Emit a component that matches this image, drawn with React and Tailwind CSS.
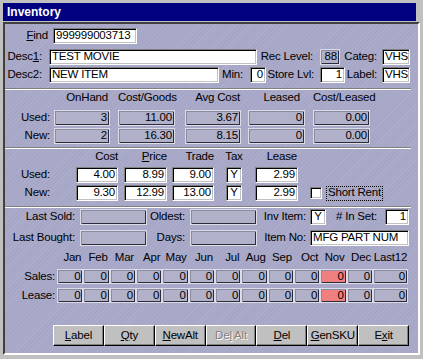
import React from 'react';

const FONT = "font-['Liberation_Sans',Arial,sans-serif]";

const WHITE_BOX =
  'h-full shrink-0 bg-white border border-t-[#808080] border-l-[#808080] border-r-white border-b-white shadow-[inset_1px_1px_0_#000000,inset_-1px_-1px_0_#c0c0c0] flex items-center overflow-hidden whitespace-nowrap';
const GRAY_BOX =
  'h-full shrink-0 border border-[#dcdce6] shadow-[inset_1px_1px_0_#8a8aa2,inset_-1px_-1px_0_#2c2c3c] flex items-center justify-end pr-[2px] overflow-hidden whitespace-nowrap';

const Lbl = ({ className = '', children }) => (
  <span className={`shrink-0 whitespace-nowrap text-right ${className}`}>{children}</span>
);

const Inp = ({ className = '', right, center, children }) => (
  <div className={`${WHITE_BOX} ${right ? 'justify-end pr-[2px]' : center ? 'justify-center' : 'pl-[2px]'} ${className}`}>
    {children}
  </div>
);

const RO = ({ className = '', pink, children }) => (
  <div className={`${GRAY_BOX} ${pink ? 'bg-[#f08080]' : 'bg-[#b1b1c9]'} ${className}`}>{children}</div>
);

const Sep = () => <div className="h-[2px] w-[406px] border-t border-t-[#808080] border-b border-b-white" />;

const months = ['Jan', 'Feb', 'Mar', 'Apr', 'May', 'Jun', 'Jul', 'Aug', 'Sep', 'Oct', 'Nov', 'Dec'];

const Btn = ({ children, disabled }) => (
  <div
    className={`h-[21px] bg-[#c0c0c0] border border-t-white border-l-white border-r-black border-b-black shadow-[inset_-1px_-1px_0_#808080] flex items-center justify-center whitespace-pre ${
      disabled ? 'text-[#808080] [text-shadow:1px_1px_0_#ffffff]' : ''
    }`}
  >
    {children}
  </div>
);

export default function App() {
  return (
    <div className={`w-[423px] h-[359px] bg-[#c0c0c0] pt-[3px] pl-[3px] overflow-hidden text-black text-[11.5px] tracking-[-0.2px] leading-none ${FONT}`}>
      {/* title bar */}
      <div className="h-[18px] w-[413px] bg-[#000080] flex items-center pl-[4px] text-white font-bold text-[12px] tracking-normal">
        Inventory
      </div>

      {/* form body */}
      <div className="mt-[1px] w-[417px] h-[333px] border-2 border-t-[#404040] border-l-[#404040] border-r-white border-b-white bg-[repeating-linear-gradient(135deg,#a6a6c6_0px,#a6a6c6_2px,#adadcb_2px,#adadcb_3px)]">
        {/* Find */}
        <div className="mt-[4px] h-[16px] flex items-center">
          <Lbl className="w-[43px]">
            <u>F</u>ind
          </Lbl>
          <Inp className="ml-[5px] w-[84px]">999999003713</Inp>
        </div>

        {/* Desc1 */}
        <div className="mt-[5px] h-[16px] flex items-center">
          <Lbl className="w-[37px]">
            Desc<u>1</u>:
          </Lbl>
          <Inp className="ml-[7px] w-[208px]">TEST MOVIE</Inp>
          <Lbl className="w-[56px]">Rec Level:</Lbl>
          <RO className="ml-[7px] w-[20px]">88</RO>
          <Lbl className="w-[37px]">Categ:</Lbl>
          <Inp className="ml-[5px] w-[28px]">VHS</Inp>
        </div>

        {/* Desc2 */}
        <div className="mt-[2px] h-[16px] flex items-center">
          <Lbl className="w-[37px]">Desc2:</Lbl>
          <Inp className="ml-[7px] w-[170px]">NEW ITEM</Inp>
          <Lbl className="w-[24px]">Min:</Lbl>
          <Inp right className="ml-[7px] w-[16px]">0</Inp>
          <Lbl className="w-[48px]">Store Lvl:</Lbl>
          <Inp right className="ml-[6px] w-[25px]">1</Inp>
          <Lbl className="w-[32px]">Label:</Lbl>
          <Inp className="ml-[5px] w-[28px]">VHS</Inp>
        </div>

        <div className="mt-[5px]">
          <Sep />
        </div>

        {/* on hand section */}
        <div className="mt-[1px] h-[14px] flex items-center">
          <span className="w-[49px] shrink-0" />
          <Lbl className="w-[56px] pr-[2px]">OnHand</Lbl>
          <Lbl className="ml-[8px] w-[57px] pr-[1px]">Cost/Goods</Lbl>
          <Lbl className="ml-[10px] w-[56px] pr-[1px]">Avg Cost</Lbl>
          <Lbl className="ml-[7px] w-[57px] pr-[5px]">Leased</Lbl>
          <Lbl className="ml-[8px] w-[57px] pr-[2px]">Cost/Leased</Lbl>
        </div>
        {[
          ['Used:', '3', '11.00', '3.67', '0', '0.00'],
          ['New:', '2', '16.30', '8.15', '0', '0.00'],
        ].map((r, i) => (
          <div key={r[0]} className={`${i === 0 ? 'mt-[5px]' : 'mt-[2px]'} h-[16px] flex items-center`}>
            <Lbl className="w-[45px]">{r[0]}</Lbl>
            <RO className="ml-[4px] w-[56px]">{r[1]}</RO>
            <RO className="ml-[8px] w-[57px]">{r[2]}</RO>
            <RO className="ml-[10px] w-[56px]">{r[3]}</RO>
            <RO className="ml-[7px] w-[57px]">{r[4]}</RO>
            <RO className="ml-[8px] w-[57px]">{r[5]}</RO>
          </div>
        ))}

        <div className="mt-[3px]">
          <Sep />
        </div>

        {/* pricing section */}
        <div className="mt-[1px] h-[14px] flex items-center">
          <span className="w-[45px] shrink-0" />
          <Lbl className="ml-[26px] w-[42px]">Cost</Lbl>
          <Lbl className="ml-[6px] w-[43px]">
            <u>P</u>rice
          </Lbl>
          <Lbl className="ml-[5px] w-[42px]">Trade</Lbl>
          <span className="ml-[8px] w-[24px] shrink-0 text-center">Tax</span>
          <Lbl className="ml-[9px] w-[43px] pr-[1px]">Lease</Lbl>
        </div>
        {[
          ['Used:', '4.00', '8.99', '9.00', 'Y', '2.99'],
          ['New:', '9.30', '12.99', '13.00', 'Y', '2.99'],
        ].map((r, i) => (
          <div key={r[0]} className={`${i === 0 ? 'mt-[3px]' : 'mt-[2px]'} h-[16px] flex items-center`}>
            <Lbl className="w-[45px]">{r[0]}</Lbl>
            <Inp right className="ml-[26px] w-[42px]">{r[1]}</Inp>
            <Inp right className="ml-[6px] w-[43px]">{r[2]}</Inp>
            <Inp right className="ml-[5px] w-[42px]">{r[3]}</Inp>
            <Inp center className="ml-[12px] w-[16px]">{r[4]}</Inp>
            <Inp right className="ml-[13px] w-[43px]">{r[5]}</Inp>
            {i === 1 && (
              <>
                <div className="ml-[12px] w-[12px] h-[12px] shrink-0 bg-white border border-t-[#808080] border-l-[#808080] border-r-white border-b-white shadow-[inset_1px_1px_0_#000000,inset_-1px_-1px_0_#c0c0c0]" />
                <span className="ml-[4px] h-[15px] px-[1px] flex items-center border border-dotted border-black whitespace-nowrap">
                  Short Rent
                </span>
              </>
            )}
          </div>
        ))}

        <div className="mt-[5px]">
          <Sep />
        </div>

        {/* dates section */}
        <div className="mt-[1px] h-[16px] flex items-center">
          <Lbl className="w-[70px]">Last Sold:</Lbl>
          <RO className="ml-[5px] w-[67px]" />
          <Lbl className="w-[38px]">Oldest:</Lbl>
          <RO className="ml-[5px] w-[67px]" />
          <Lbl className="w-[49px]">Inv Item:</Lbl>
          <Inp center className="ml-[4px] w-[16px]">Y</Inp>
          <Lbl className="w-[51px]"># In Set:</Lbl>
          <Inp right className="ml-[8px] w-[24px]">1</Inp>
        </div>
        <div className="mt-[5px] h-[16px] flex items-center">
          <Lbl className="w-[70px]">Last Bought:</Lbl>
          <RO className="ml-[5px] w-[67px]" />
          <Lbl className="w-[38px]">Days:</Lbl>
          <RO className="ml-[5px] w-[67px]" />
          <Lbl className="w-[49px]">Item No:</Lbl>
          <Inp className="ml-[4px] w-[99px]">MFG PART NUM</Inp>
        </div>

        {/* monthly */}
        <div className="mt-[5px] h-[14px] flex items-center">
          <span className="w-[52px] shrink-0" />
          <div className="grid grid-cols-[repeat(12,26.33px)_35px]">
            {months.map((m) => (
              <span key={m} className="text-right pr-[2px]">
                {m}
              </span>
            ))}
            <span className="text-center">Last12</span>
          </div>
        </div>
        {['Sales:', 'Lease:'].map((l) => (
          <div key={l} className="mt-[4px] h-[15px] flex items-center">
            <Lbl className="w-[50px]">{l}</Lbl>
            <div className="ml-[2px] h-full grid grid-cols-[repeat(12,26.33px)_35px]">
              {months.map((m, j) => (
                <RO key={m} pink={j === 10}>
                  0
                </RO>
              ))}
              <RO>0</RO>
            </div>
          </div>
        ))}

        {/* buttons */}
        <div className="mt-[22px] ml-[48px] grid grid-cols-[repeat(7,50.86px)]">
          <Btn>
            <u>L</u>abel
          </Btn>
          <Btn>
            <u>Q</u>ty
          </Btn>
          <Btn>
            <u>N</u>ewAlt
          </Btn>
          <Btn disabled>
            <span>De</span>
            <u>l</u>
            <span>{' Alt'}</span>
          </Btn>
          <Btn>
            <u>D</u>el
          </Btn>
          <Btn>
            <u>G</u>enSKU
          </Btn>
          <Btn>
            E<u>x</u>it
          </Btn>
        </div>
      </div>
    </div>
  );
}
